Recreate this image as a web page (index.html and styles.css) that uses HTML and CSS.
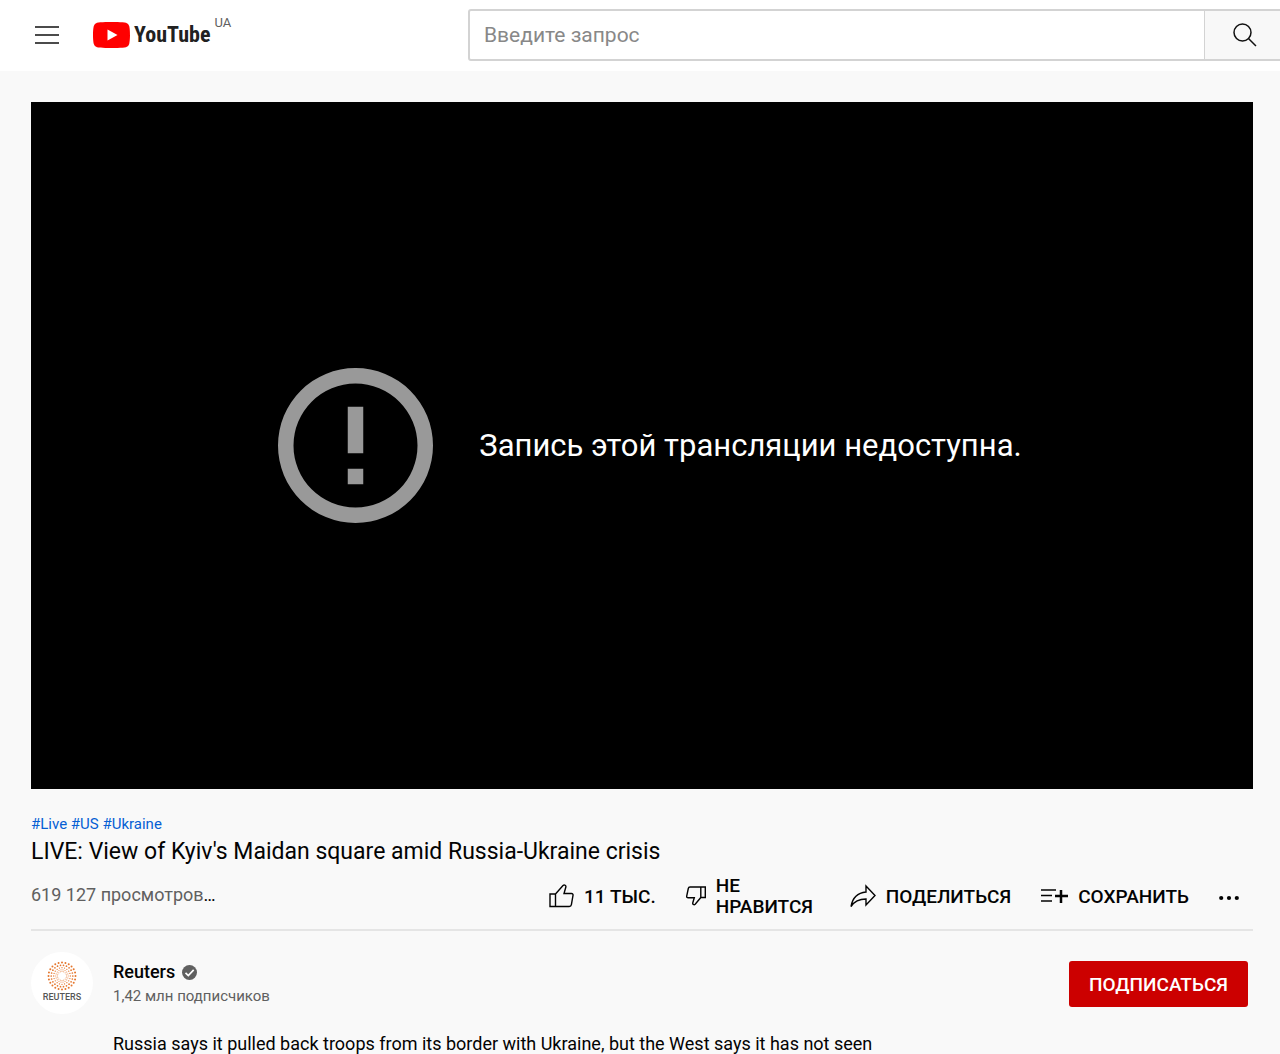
FILE: index.html
```
<!DOCTYPE html>
<html lang="ru">

<head>
    <meta charset="UTF-8">
    <meta name="viewport" content="width=device-width, initial-scale=1.0">
    <title>LIVE: View of Kyiv's Maidan square amid Russia-Ukraine crisis - YouTube</title>
    <link rel="stylesheet" href="styles.css">
</head>

<body>
    <header class="header">
        <div class="start">
            <button class="icon-btn" type="button" aria-label="Меню">
                <svg width="24" height="20" viewBox="0 0 24 20"><path d="M0 2h24M0 10h24M0 18h24" stroke="#111" stroke-width="1.5"/></svg>
            </button>
            <a href="#" class="logo">
                <svg width="37" height="26" viewBox="0 0 37 26">
                    <path d="M36.2 4.1A4.6 4.6 0 0 0 33 .8C30.1 0 18.500 0 18.500 0S6.900 0 4 .8A4.600 4.600 0 0 0 .8 4.100C0 7 0 13 0 13s0 6 .8 8.900A4.600 4.600 0 0 0 4 25.200c2.900.8 14.500.8 14.500.8s11.600 0 14.500-.8a4.600 4.600 0 0 0 3.200-3.300C37 19 37 13 37 13s0-6-.8-8.900z" fill="#f00"/>
                    <path d="M14.500 7.500v11L24.500 13z" fill="#fff"/>
                </svg>
                <span class="word">YouTube</span>
                <span class="country">UA</span>
            </a>
        </div>
        <form class="search">
            <input type="text" class="search-input" placeholder="Введите запрос" aria-label="Введите запрос">
            <button class="search-btn" type="button" aria-label="Поиск">
                <svg width="24" height="24" viewBox="0 0 24 24"><g fill="none" stroke="#111" stroke-width="1.5"><circle cx="9.500" cy="9.500" r="8.500"/><path d="M15.500 15.500l7.500 7.500"/></g></svg>
            </button>
        </form>
    </header>

    <main class="main">
        <div class="player">
            <svg class="alert" viewBox="2 2 20 20"><path fill="#999" d="M11 15h2v2h-2zm0-8h2v6h-2zm1-5a10 10 0 1 0 0 20 10 10 0 0 0 0-20zm0 18a8 8 0 1 1 0-16 8 8 0 0 1 0 16z"/></svg>
            <p class="message">Запись этой трансляции недоступна.</p>
        </div>

        <div class="tags"><a href="#">#Live</a> <a href="#">#US</a> <a href="#">#Ukraine</a></div>
        <h1 class="title">LIVE: View of Kyiv's Maidan square amid Russia-Ukraine crisis</h1>

        <div class="info">
            <p class="views">619 127 просмотров<span>…</span></p>
            <div class="actions">
                <button type="button">
                    <svg width="25" height="24" viewBox="0 0 25 24"><path d="M1 10h5.500v12.500H1zM6.500 10L14 1.500c1.500-1.300 3.300 0 2.800 1.800L15 9.500h7.500c1.200 0 1.700.9 1.500 1.900l-1.600 9.300c-.2 1.200-1 1.800-2.200 1.800H6.500"/></svg>
                    <span>11 ТЫС.</span>
                </button>
                <button type="button" class="dislike">
                    <svg width="20" height="20" viewBox="0 0 20 20"><path d="M19.300 1h-4.500v10.500h4.500zM14.800 11.500L9.200 18.300c-1.300 1-2.800 0-2.400-1.500l1.500-5H2.200c-1.200 0-1.700-.8-1.500-1.700l1.600-7.600C2.500 1.500 3 1 4 1h10.800"/></svg>
                    <span>НЕ НРАВИТСЯ</span>
                </button>
                <button type="button">
                    <svg width="26" height="24" viewBox="0 0 26 24"><path d="M16 2l9 9.500-9 9.500v-6C9 15 4.500 17 1 22.500 2.500 14 7.500 8.800 16 8z"/></svg>
                    <span>ПОДЕЛИТЬСЯ</span>
                </button>
                <button type="button">
                    <svg width="27" height="16" viewBox="0 0 27 16"><path d="M0 2h15M0 7.500h11M0 13h11"/><path d="M14 8h13M20 2v13" stroke-width="2.500"/></svg>
                    <span>СОХРАНИТЬ</span>
                </button>
                <button type="button" class="more" aria-label="Ещё">
                    <svg width="20" height="20" viewBox="0 0 20 20"><g fill="#030303" stroke="none"><circle cx="2.200" cy="12" r="2.100"/><circle cx="10" cy="12" r="2.100"/><circle cx="17.800" cy="12" r="2.100"/></g></svg>
                </button>
            </div>
        </div>

        <div class="channel">
            <a href="#" class="avatar">
                <svg width="30" height="30" viewBox="-15 -15 30 30" fill="none" stroke="#e5772e" stroke-linecap="round">
                    <circle r="13.500" stroke-width="2" pathLength="96" stroke-dasharray="0 4"/>
                    <circle r="10.800" stroke-width="1.700" pathLength="88" stroke-dasharray="0 4"/>
                    <circle r="8.300" stroke-width="1.300" pathLength="80" stroke-dasharray="0 4"/>
                    <circle r="6.200" stroke-width="1" pathLength="72" stroke-dasharray="0 4"/>
                    <circle r="4.500" stroke-width=".8" pathLength="64" stroke-dasharray="0 4"/>
                </svg>
                <span>REUTERS</span>
            </a>
            <div class="detail">
                <div class="owner">
                    <div>
                        <a href="#" class="name">Reuters
                            <svg width="15" height="15" viewBox="0 0 15 15"><circle cx="7.500" cy="7.500" r="7.500" fill="#606060"/><path d="M3.500 7.800l2.800 2.800 5.400-5.800" fill="none" stroke="#fff" stroke-width="1.700"/></svg>
                        </a>
                        <p class="subs">1,42 млн подписчиков</p>
                    </div>
                    <button class="subscribe" type="button">ПОДПИСАТЬСЯ</button>
                </div>
                <p class="desc">Russia says it pulled back troops from its border with Ukraine, but the West says it has not seen</p>
            </div>
        </div>
    </main>
</body>

</html>
```
FILE: styles.css
```
* {
    margin: 0;
    padding: 0;
    box-sizing: border-box;
}

body {
    background-color: #f9f9f9;
    color: #030303;
    font-family: Roboto, "Liberation Sans", sans-serif;
}

a {
    color: inherit;
    text-decoration: none;
}

button {
    border: 0;
    background: none;
    color: inherit;
    font-family: inherit;
    cursor: pointer;
}

svg {
    display: block;
    flex-shrink: 0;
}

/* header */
.header {
    display: flex;
    align-items: center;
    height: 71px;
    padding: 0 0 2px 35px;
    background-color: #fff;
}

.start {
    display: flex;
    align-items: center;
    flex: 0 0 433px;
    gap: 34px;
}

.logo {
    display: flex;
    align-items: center;
    gap: 4px;
}

.word {
    color: #212121;
    font: bold 22px/28px "Roboto Condensed", "Liberation Sans Narrow", Roboto, sans-serif;
}

.country {
    align-self: flex-start;
    margin-top: -6px;
    color: #606060;
    font-size: 13px;
    line-height: 16px;
}

.search {
    display: flex;
    flex: 1;
    height: 52px;
}

.search-input {
    flex: 1;
    min-width: 0;
    padding: 0 14px;
    border: 2px solid #d3d3d3;
    border-right-width: 1px;
    border-radius: 3px 0 0 3px;
    background-color: #fff;
    font-family: inherit;
    font-size: 21px;
}

.search-input::placeholder {
    color: #888;
}

.search-btn {
    display: flex;
    align-items: center;
    justify-content: center;
    width: 75px;
    padding-left: 4px;
    border: solid #d3d3d3;
    border-width: 2px 0;
    background-color: #f8f8f8;
}

/* video */
.main {
    padding: 31px 27px 0 31px;
}

.player {
    display: flex;
    align-items: center;
    justify-content: center;
    gap: 46px;
    aspect-ratio: 16 / 9;
    padding-left: 16px;
    background-color: #000;
}

.alert {
    width: 155px;
}

.message {
    color: #fff;
    font-size: 31px;
}

.tags {
    margin-top: 25px;
    color: #065fd4;
    font-size: 15px;
    line-height: 20px;
}

.title {
    font-size: 23px;
    font-weight: 400;
    line-height: 35px;
}

.info {
    display: flex;
    align-items: center;
    justify-content: space-between;
    height: 62px;
    border-bottom: 2px solid #e5e5e5;
}

.views {
    padding-bottom: 10px;
    color: #606060;
    font-size: 18px;
}

.views span {
    color: #030303;
}

.actions {
    display: flex;
    align-items: center;
    gap: 30px;
    padding: 0 14px 6px 0;
}

.actions button {
    display: flex;
    align-items: center;
    gap: 10px;
    font-size: 19px;
    font-weight: 500;
    line-height: 21px;
    text-align: left;
}

.actions svg {
    fill: none;
    stroke: #030303;
    stroke-width: 1.4;
}

.dislike span {
    width: 104px;
}

/* channel */
.channel {
    display: flex;
    gap: 20px;
    padding-top: 21px;
}

.avatar {
    display: flex;
    flex-direction: column;
    align-items: center;
    flex-shrink: 0;
    gap: 1px;
    width: 62px;
    height: 62px;
    padding-top: 9px;
    border-radius: 50%;
    background-color: #fff;
    color: #555;
    font-size: 9px;
    font-weight: 500;
    line-height: 11px;
}

.detail {
    flex: 1;
}

.owner {
    display: flex;
    align-items: center;
    justify-content: space-between;
    height: 64px;
    padding-right: 5px;
}

.name {
    display: flex;
    align-items: center;
    gap: 7px;
    font-size: 18px;
    font-weight: 500;
    line-height: 24px;
}

.subs {
    color: #606060;
    font-size: 15px;
    line-height: 24px;
}

.subscribe {
    height: 46px;
    padding: 0 20px;
    border-radius: 3px;
    background-color: #c00;
    color: #fff;
    font-size: 19px;
    font-weight: 500;
}

.desc {
    margin-top: 16px;
    font-size: 18px;
    line-height: 24px;
}
```
